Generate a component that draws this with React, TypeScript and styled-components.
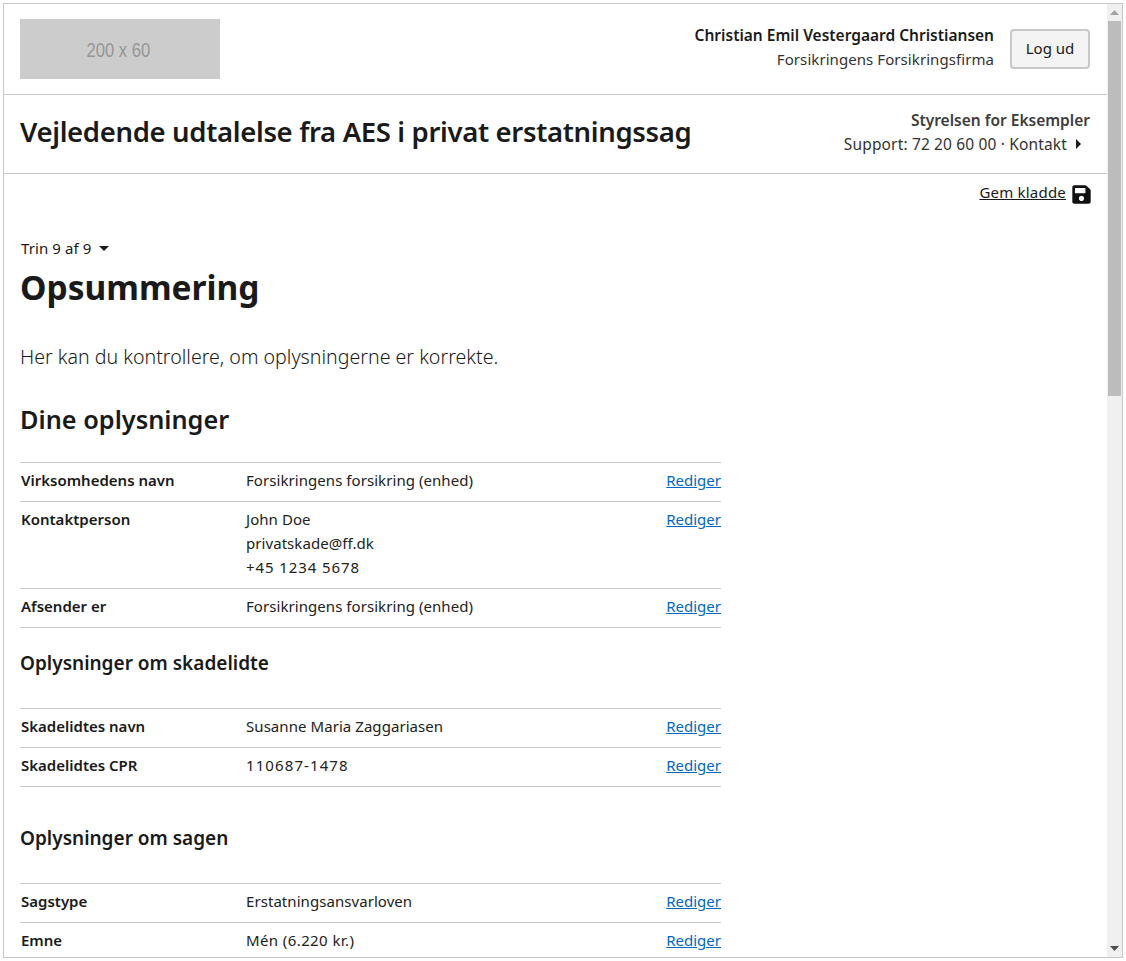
import React from "react";
import styled, { createGlobalStyle } from "styled-components";
import { FaSave } from "react-icons/fa";

const Global = createGlobalStyle`
  html, body { margin: 0; padding: 0; background: #fff; overflow: hidden; }
  body { font-family: "Noto Sans", "Open Sans", sans-serif; color: #1a1a1a; font-size: 16px; line-height: 24px; }
`;
const Frame = styled.div`
  margin: 3px 0 0 3px; width: 1120px; height: 955px; box-sizing: border-box;
  border: 1px solid #c8c8c8; display: flex; overflow: hidden; background: #fff;
`;
const Page = styled.div`flex: 1; min-width: 0; overflow: hidden;`;
const Scrollbar = styled.div`
  width: 15px; flex: none; background: #f0f0f0; display: flex; flex-direction: column; align-items: center;
`;
const ArrowBox = styled.div`height: 17px; flex: none; display: flex; align-items: center; justify-content: center;`;
const Thumb = styled.div`width: 13px; height: 375px; background: #bcbcbc; flex: none;`;
const Spacer = styled.div`flex: 1;`;
const TopBar = styled.header`
  height: 91px; box-sizing: border-box; border-bottom: 1px solid #c8c8c8; padding: 15px 17px 0 16px;
  display: flex; justify-content: space-between; align-items: flex-start;
`;
const Logo = styled.div`
  width: 200px; height: 60px; background: #ccc; color: #969696; font: 20px/62px "Liberation Sans", sans-serif;
  text-align: center;
`;
const LogoText = styled.span`display: inline-block; transform: scaleX(0.83); margin-left: -4px;`;
const UserBlock = styled.div`display: flex; align-items: center; gap: 16px; padding-top: 4px;`;
const UserText = styled.div`text-align: right;`;
const UserName = styled.div`font-weight: 600; font-size: 15.5px;`;
const UserOrg = styled.div`font-size: 15px; color: #333; letter-spacing: 0.07px;`;
const LogoutButton = styled.button`
  width: 80px; height: 40px; margin-top: 4px; box-sizing: border-box; background: #f4f4f4; border: 2px solid #c8c8c8; border-radius: 4px;
  font: 400 15px "Noto Sans", sans-serif; color: #1a1a1a; padding: 0 0 3px;
`;
const TitleBar = styled.div`
  height: 79px; box-sizing: border-box; border-bottom: 1px solid #c8c8c8; padding: 0 17px 4px 16px;
  display: flex; justify-content: space-between; align-items: center;
`;
const AppTitle = styled.h2`margin: 0; font-size: 27.5px; line-height: 36px; font-weight: 600; letter-spacing: -0.34px;`;
const SupportBlock = styled.div`text-align: right;`;
const Agency = styled.div`font-weight: 600; font-size: 15.5px; color: #3d3d3d;`;
const SupportLine = styled.div`
  display: flex; align-items: center; justify-content: flex-end; font-size: 15.5px; letter-spacing: 0.15px;
  color: #333; gap: 9px; padding-right: 9px;
`;
const SaveRow = styled.div`
  display: flex; justify-content: flex-end; align-items: center; gap: 5px; padding: 6px 15px 0 0; height: 24px;
`;
const SaveIcon = styled(FaSave)`margin-top: 4px;`;
const SaveLink = styled.a`font-size: 15px; letter-spacing: 0.2px; color: #1a1a1a; text-decoration: underline;`;
const Content = styled.main`padding: 32px 0 0 16px; width: 701px;`;
const StepLine = styled.div`display: flex; align-items: center; gap: 8px; font-size: 15px; letter-spacing: 0.1px; height: 24px; padding-left: 1px;`;
const Heading = styled.h1`margin: 5px 0 0; font-size: 33.5px; line-height: 44px; font-weight: 700;`;
const Lead = styled.p`margin: 33px 0 0; font-size: 19.6px; line-height: 30px; font-weight: 300;`;
const Section = styled.h2`margin: 29px 0 0; font-size: 25.3px; line-height: 36px; font-weight: 600;`;
const Sub = styled.h3<{ $top: number }>`margin: ${p => p.$top}px 0 0; font-size: 19px; line-height: 28px; font-weight: 600;`;
const Table = styled.div<{ $top: number }>`margin-top: ${p => p.$top}px; border-top: 1px solid #c8c8c8;`;
const Row = styled.div`
  display: grid; grid-template-columns: 226px 1fr auto; padding: 5px 0 9px; border-bottom: 1px solid #c8c8c8;
`;
const Label = styled.div`font-weight: 600; font-size: 15px; padding-left: 1px;`;
const ValueLine = styled.div<{ $ls?: number }>`font-size: 15px; color: #222; letter-spacing: ${p => p.$ls ?? 0.06}px;`;
const EditLink = styled.a`font-size: 15px; color: #0067c5; text-decoration: underline;`;

const Caret = ({ d, fill = "#1a1a1a", w, h }: { d: string; fill?: string; w: number; h: number }) => (
  <svg width={w} height={h} viewBox={`0 0 ${w} ${h}`}><path d={d} fill={fill} /></svg>
);

type V = { t: string; ls?: number };
const rows = (items: [string, V[]][]) =>
  items.map(([l, v]) => (
    <Row key={l}>
      <Label>{l}</Label>
      <div>{v.map(x => <ValueLine key={x.t} $ls={x.ls}>{x.t}</ValueLine>)}</div>
      <EditLink href="#">Rediger</EditLink>
    </Row>
  ));

export default function App() {
  return (
    <>
      <Global />
      <Frame>
        <Page>
          <TopBar>
            <Logo><LogoText>200 x 60</LogoText></Logo>
            <UserBlock>
              <UserText>
                <UserName>Christian Emil Vestergaard Christiansen</UserName>
                <UserOrg>Forsikringens Forsikringsfirma</UserOrg>
              </UserText>
              <LogoutButton>Log ud</LogoutButton>
            </UserBlock>
          </TopBar>
          <TitleBar>
            <AppTitle>Vejledende udtalelse fra AES i privat erstatningssag</AppTitle>
            <SupportBlock>
              <Agency>Styrelsen for Eksempler</Agency>
              <SupportLine>
                Support: 72 20 60 00 · Kontakt
                <Caret w={5} h={10} d="M0 0L5 5L0 10Z" />
              </SupportLine>
            </SupportBlock>
          </TitleBar>
          <SaveRow>
            <SaveLink href="#">Gem kladde</SaveLink>
            <SaveIcon size={21} color="#111" />
          </SaveRow>
          <Content>
            <StepLine>
              Trin 9 af 9
              <Caret w={10} h={5} d="M0 0H10L5 5Z" />
            </StepLine>
            <Heading>Opsummering</Heading>
            <Lead>Her kan du kontrollere, om oplysningerne er korrekte.</Lead>
            <Section>Dine oplysninger</Section>
            <Table $top={25}>
              {rows([
                ["Virksomhedens navn", [{ t: "Forsikringens forsikring (enhed)" }]],
                ["Kontaktperson", [{ t: "John Doe" }, { t: "privatskade@ff.dk" }, { t: "+45 1234 5678", ls: 0.9 }]],
                ["Afsender er", [{ t: "Forsikringens forsikring (enhed)" }]],
              ])}
            </Table>
            <Sub $top={21}>Oplysninger om skadelidte</Sub>
            <Table $top={31}>
              {rows([
                ["Skadelidtes navn", [{ t: "Susanne Maria Zaggariasen" }]],
                ["Skadelidtes CPR", [{ t: "110687-1478", ls: 1.1 }]],
              ])}
            </Table>
            <Sub $top={37}>Oplysninger om sagen</Sub>
            <Table $top={31}>
              {rows([
                ["Sagstype", [{ t: "Erstatningsansvarloven" }]],
                ["Emne", [{ t: "Mén (6.220 kr.)", ls: 0.4 }]],
              ])}
            </Table>
          </Content>
        </Page>
        <Scrollbar>
          <ArrowBox><Caret w={9} h={5} fill="#a3a3a3" d="M4.5 0L9 5H0Z" /></ArrowBox>
          <Thumb />
          <Spacer />
          <ArrowBox><Caret w={9} h={5} fill="#505050" d="M0 0H9L4.5 5Z" /></ArrowBox>
        </Scrollbar>
      </Frame>
    </>
  );
}
